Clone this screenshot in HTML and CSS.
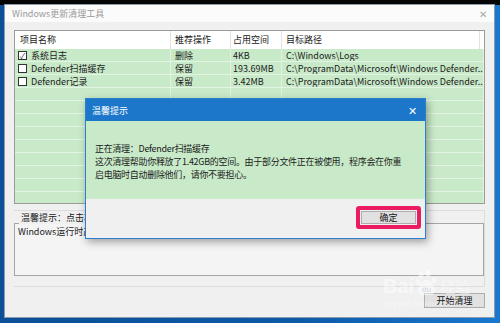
FILE: index.html
```html
<!DOCTYPE html>
<html lang="zh-CN">
<head>
    <meta charset="UTF-8">
    <title>Windows更新清理工具</title>
    <link rel="stylesheet" href="styles.css">
</head>
<body>
    <div class="topbar"></div>
    <div class="desk">
        <div class="win">
            <div class="win-title">
                <span>Windows更新清理工具</span>
                <span class="win-x">✕</span>
            </div>
            <div class="win-body">
                <div class="list">
                    <div class="row head">
                        <div class="c1">项目名称</div>
                        <div class="c2">推荐操作</div>
                        <div class="c3">占用空间</div>
                        <div class="c4">目标路径</div>
                    </div>
                    <div class="row">
                        <div class="c1"><span class="cb on">✓</span>系统日志</div>
                        <div class="c2">删除</div>
                        <div class="c3">4KB</div>
                        <div class="c4">C:\Windows\Logs</div>
                    </div>
                    <div class="row">
                        <div class="c1"><span class="cb"></span>Defender扫描缓存</div>
                        <div class="c2">保留</div>
                        <div class="c3">193.69MB</div>
                        <div class="c4">C:\ProgramData\Microsoft\Windows Defender...</div>
                    </div>
                    <div class="row">
                        <div class="c1"><span class="cb"></span>Defender记录</div>
                        <div class="c2">保留</div>
                        <div class="c3">3.42MB</div>
                        <div class="c4">C:\ProgramData\Microsoft\Windows Defender...</div>
                    </div>
                    <div class="row"><div class="c1"></div><div class="c2"></div><div class="c3"></div><div class="c4"></div></div>
                    <div class="row"><div class="c1"></div><div class="c2"></div><div class="c3"></div><div class="c4"></div></div>
                    <div class="row"><div class="c1"></div><div class="c2"></div><div class="c3"></div><div class="c4"></div></div>
                    <div class="row"><div class="c1"></div><div class="c2"></div><div class="c3"></div><div class="c4"></div></div>
                    <div class="row"><div class="c1"></div><div class="c2"></div><div class="c3"></div><div class="c4"></div></div>
                    <div class="row"><div class="c1"></div><div class="c2"></div><div class="c3"></div><div class="c4"></div></div>
                    <div class="row"><div class="c1"></div><div class="c2"></div><div class="c3"></div><div class="c4"></div></div>
                    <div class="row"><div class="c1"></div><div class="c2"></div><div class="c3"></div><div class="c4"></div></div>
                    <div class="row"><div class="c1"></div><div class="c2"></div><div class="c3"></div><div class="c4"></div></div>
                </div>
                <div class="group">
                    <div class="group-label">温馨提示：点击项目查看详细说明</div>
                    <div class="memo">Windows运行时产生的日志文件，可以放心删除。</div>
                </div>
                <div class="actions">
                    <button class="btn">开始清理</button>
                </div>
            </div>
        </div>
    </div>

    <!-- message box on top of the main window -->
    <div class="dialog">
        <div class="dlg-title">
            <span>温馨提示</span>
            <span class="dlg-x">✕</span>
        </div>
        <div class="dlg-content">
            <p>正在清理：Defender扫描缓存</p>
            <p>这次清理帮助你释放了1.42GB的空间。由于部分文件正在被使用，程序会在你重</p>
            <p>启电脑时自动删除他们，请你不要担心。</p>
        </div>
        <div class="dlg-foot">
            <div class="mark"><button class="btn ok">确定</button></div>
        </div>
    </div>

    <div class="watermark">
        <div class="wm-top">
            <span class="wm-bai">Bai</span>
            <svg class="wm-paw" width="24" height="26" viewBox="0 0 24 26">
                <ellipse cx="6" cy="5" rx="2.6" ry="3.4" fill="#fff"/>
                <ellipse cx="13" cy="3.5" rx="2.6" ry="3.4" fill="#fff"/>
                <ellipse cx="3" cy="12" rx="2.4" ry="3" fill="#fff"/>
                <ellipse cx="19" cy="10" rx="2.4" ry="3" fill="#fff"/>
                <path d="M11 10c-4 0-8 6-8 10 0 3 2 5 5 5h7c3 0 5-2 5-5 0-4-5-10-9-10z" fill="#fff"/>
                <text x="11.5" y="22" font-size="8" text-anchor="middle" fill="#9fb4c8" font-family="Liberation Sans, sans-serif">du</text>
            </svg>
            <span class="wm-jy">经验</span>
        </div>
        <div class="wm-url">jingyan.baidu.com</div>
    </div>
</body>
</html>
```

FILE: styles.css
```css
* { margin: 0; padding: 0; box-sizing: border-box; }
body {
    width: 500px;
    height: 323px;
    overflow: hidden;
    background: linear-gradient(90deg, #0b4f98 0%, #0d5aa8 60%, #1a78cf 100%);
    font-family: "Noto Sans CJK SC", "Noto Sans", sans-serif;
    font-size: 9px;
    color: #1a1a1a;
    position: relative;
}
.topbar { height: 5px; background: #050505; }
.desk {
    display: flex;
    padding-left: 5px;
}
.win {
    width: 489px;
    height: 312px;
    background: #f0f0f0;
    box-shadow: 0 0 0 1px #8a9bb0;
    display: flex;
    flex-direction: column;
}
.win-title {
    height: 17px;
    background: #fbfbfb;
    color: #9a9a9a;
    display: flex;
    justify-content: space-between;
    align-items: center;
    padding: 0 7px 1px 7px;
    font-size: 9px;
}
.win-x { font-size: 10px; color: #a8a8a8; }
.win-body {
    flex: 1;
    padding: 8px 9px 0 9px;
    display: flex;
    flex-direction: column;
}

/* list view */
.list {
    height: 174px;
    border: 1px solid #9a9a9a;
    background: #c9eac9;
    overflow: hidden;
}
.row {
    display: grid;
    grid-template-columns: 156px 60px 51px 1fr;
    height: 13px;
    line-height: 13px;
    border-bottom: 1px solid #e4f4e4;
    white-space: nowrap;
}
.row > div {
    border-right: 1px solid #dff1df;
    overflow: hidden;
}
.row.head {
    height: 18px;
    line-height: 18px;
    background: #fff;
    border-bottom: none;
    grid-template-columns: 156px 60px 51px 1fr 4px;
}
.row.head > div { border-right: 1px solid #e2e2e2; }
.row.head::after {
    content: "";
    background: #fff;
}
.c1 { padding-left: 5px; display: flex; align-items: center; }
.c2 { padding-left: 4px; }
.c3 { padding-left: 2px; }
.c4 { padding-left: 4px; }
.cb {
    width: 9px;
    height: 9px;
    border: 1px solid #333;
    background: #fff;
    margin: 0 4px 0 -2px;
    font-size: 8px;
    line-height: 7px;
    text-align: center;
    color: #333;
}

/* tips group */
.group {
    margin-top: 6px;
    border: 1px solid #dcdcdc;
    border-left: none;
    padding-bottom: 10px;
    position: relative;
}
.group-label {
    margin: -7px 0 0 5px;
    padding: 0 2px;
    background: #f0f0f0;
    display: inline-block;
    line-height: 13px;
}
.memo {
    height: 53px;
    margin-top: -1px;
    background: #f4f4f4;
    border: 1px solid #a5a5a5;
    padding: 1px 3px;
    line-height: 13px;
}
.actions {
    display: flex;
    justify-content: flex-end;
    padding-top: 6px;
}
.btn {
    width: 61px;
    height: 15px;
    background: #e1e1e1;
    border: 1px solid #adadad;
    font-family: "Noto Sans CJK SC", "Noto Sans", sans-serif;
    font-size: 9px;
    color: #111;
}

/* message box */
.dialog {
    position: absolute;
    left: 85px;
    top: 98px;
    width: 341px;
    height: 141px;
    background: #f0f0f0;
    border: 1px solid #2a7fcf;
    box-shadow: 2px 3px 8px rgba(0, 0, 0, 0.35);
    display: flex;
    flex-direction: column;
}
.dlg-title {
    height: 22px;
    background: #1c76c9;
    color: #fff;
    display: flex;
    justify-content: space-between;
    align-items: center;
    padding: 0 8px 0 6px;
}
.dlg-x { font-size: 11px; }
.dlg-content {
    height: 78px;
    background: #c9eac9;
    padding: 21px 9px 0 9px;
    line-height: 13px;
    letter-spacing: -0.3px;
}
.dlg-foot {
    flex: 1;
    display: flex;
    justify-content: flex-end;
    align-items: flex-start;
    padding: 7px 4px 0 0;
}
.mark {
    border: 4px solid #ea1b63;
    border-radius: 3px;
    padding: 1px 1px;
    display: flex;
}
.btn.ok { width: 55px; height: 13px; line-height: 11px; }

/* site watermark */
.watermark {
    position: absolute;
    left: 383px;
    top: 270px;
    color: #fff;
    opacity: 0.5;
}
.wm-top { display: flex; align-items: flex-end; }
.wm-bai {
    font-family: "Liberation Sans", sans-serif;
    font-size: 20px;
    font-weight: bold;
    line-height: 21px;
}
.wm-paw { margin: 0 1px 1px 1px; }
.wm-jy { font-size: 15px; line-height: 20px; }
.wm-url {
    font-family: "Liberation Sans", sans-serif;
    font-size: 8px;
    letter-spacing: 0.5px;
    margin-top: 2px;
}
```
